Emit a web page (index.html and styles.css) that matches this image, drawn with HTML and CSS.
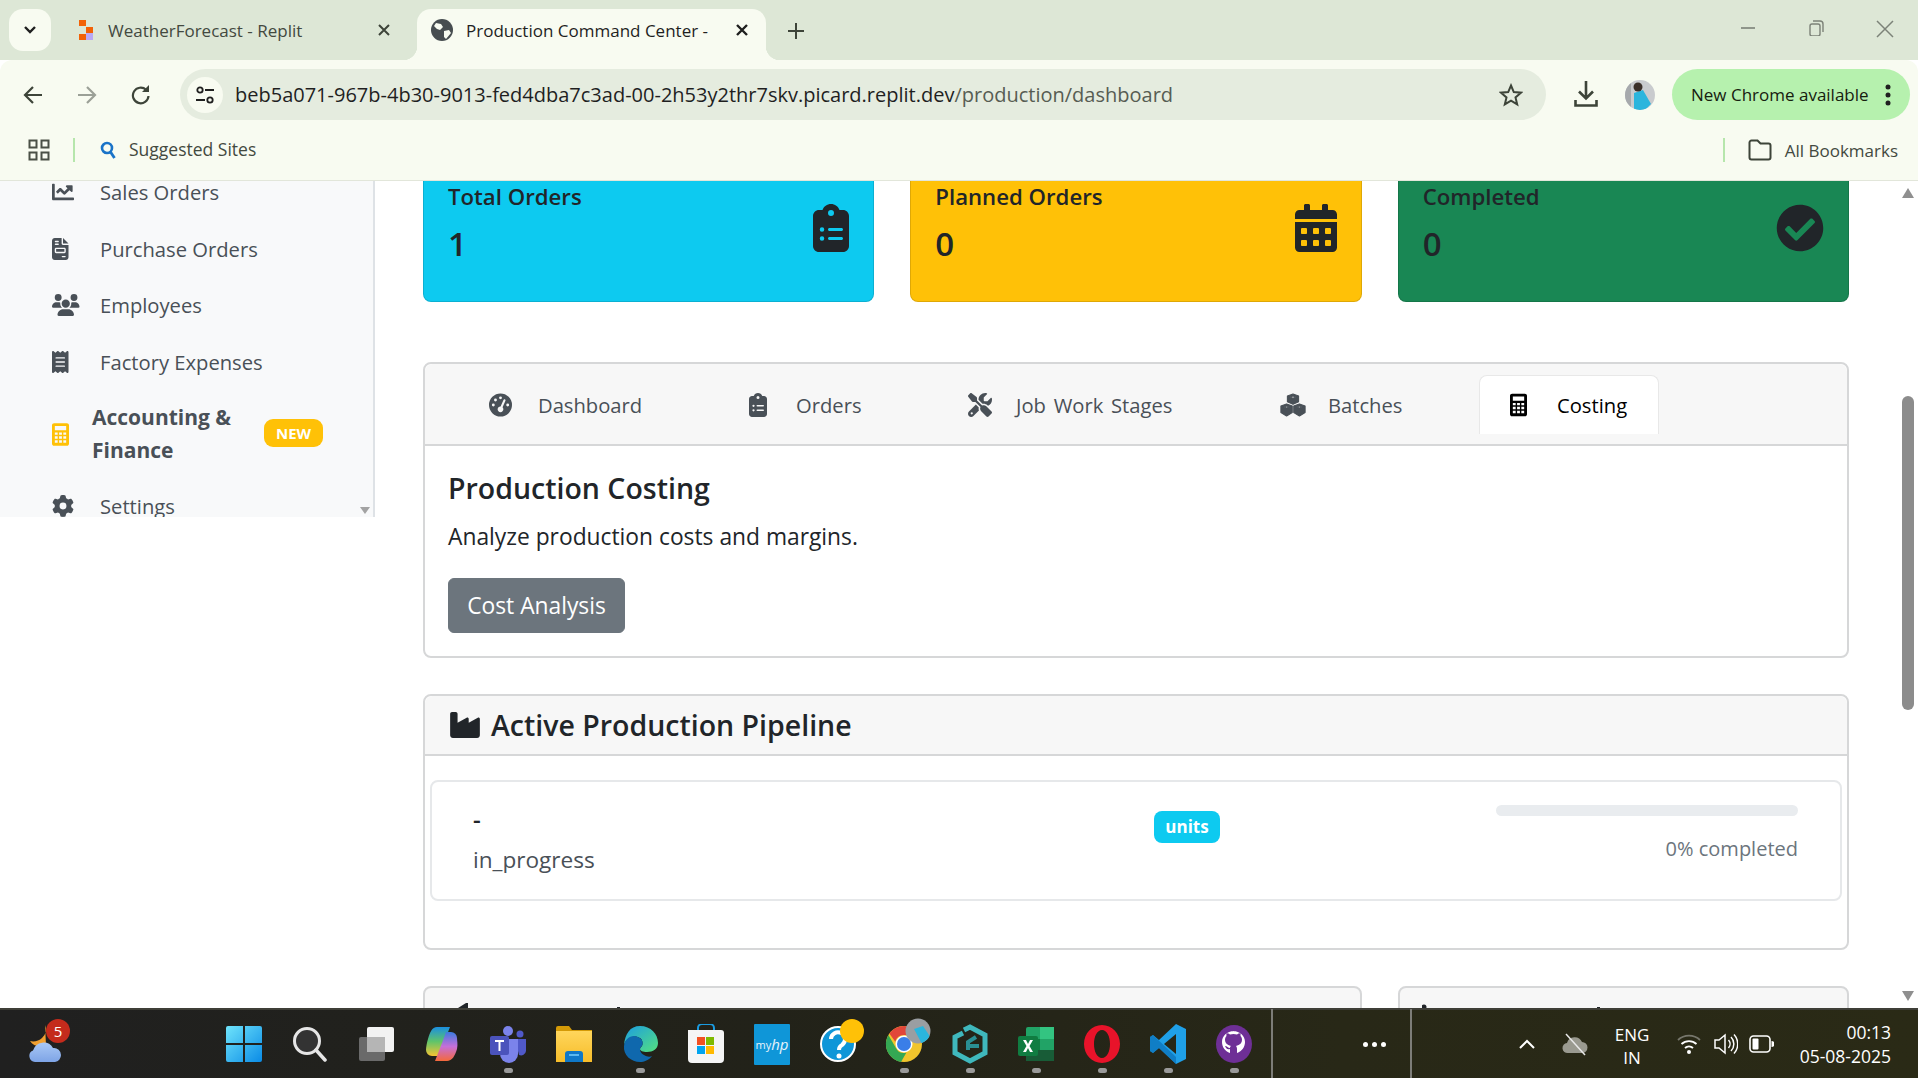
FILE: index.html
```html
<!DOCTYPE html>
<html lang="en">
<head>
    <meta charset="UTF-8">
    <title>Production Command Center</title>
    <link rel="stylesheet" href="styles.css">
</head>
<body>
<svg class="defs" xmlns="http://www.w3.org/2000/svg">
    <symbol id="i-chart" viewBox="0 0 512 512" preserveAspectRatio="xMinYMid"><path d="M496 384H64V80c0-8.84-7.16-16-16-16H16C7.16 64 0 71.16 0 80v336c0 17.67 14.33 32 32 32h464c8.84 0 16-7.16 16-16v-32c0-8.84-7.16-16-16-16zM464 96H345.94c-21.38 0-32.09 25.85-16.97 40.97l32.4 32.4L288 242.75l-73.37-73.37c-12.5-12.5-32.76-12.5-45.25 0l-68.69 68.69c-6.25 6.25-6.25 16.38 0 22.63l22.62 22.62c6.25 6.25 16.38 6.25 22.63 0L192 237.25l73.37 73.37c12.5 12.5 32.76 12.5 45.25 0l96-96 32.4 32.4c15.12 15.12 40.97 4.41 40.97-16.97V112c0-8.84-7.16-16-16-16z"/></symbol>
    <symbol id="i-invoice" viewBox="0 0 384 512" preserveAspectRatio="xMinYMid"><path d="M64 0C28.7 0 0 28.7 0 64V448c0 35.3 28.7 64 64 64H320c35.3 0 64-28.7 64-64V160H256c-17.7 0-32-14.3-32-32V0H64zM256 0V128H384L256 0zM80 64h64c8.8 0 16 7.2 16 16s-7.2 16-16 16H80c-8.8 0-16-7.2-16-16s7.2-16 16-16zm0 64h64c8.8 0 16 7.2 16 16s-7.2 16-16 16H80c-8.8 0-16-7.2-16-16s7.2-16 16-16zm16 96H288c17.7 0 32 14.3 32 32v64c0 17.7-14.3 32-32 32H96c-17.7 0-32-14.3-32-32V256c0-17.7 14.3-32 32-32zm0 32v64H288V256H96zM240 416h64c8.8 0 16 7.2 16 16s-7.2 16-16 16H240c-8.8 0-16-7.2-16-16s7.2-16 16-16z"/></symbol>
    <symbol id="i-users" viewBox="0 0 640 512" preserveAspectRatio="xMinYMid"><path d="M144 0a80 80 0 1 1 0 160A80 80 0 1 1 144 0zM512 0a80 80 0 1 1 0 160A80 80 0 1 1 512 0zM0 298.7C0 239.8 47.8 192 106.7 192h42.7c15.9 0 31 3.5 44.6 9.7c-1.3 7.2-1.9 14.7-1.9 22.3c0 38.2 16.8 72.5 43.3 96c-.2 0-.4 0-.7 0H21.3C9.6 320 0 310.4 0 298.7zM405.3 320c-.2 0-.4 0-.7 0c26.6-23.5 43.3-57.8 43.3-96c0-7.6-.7-15-1.9-22.3c13.6-6.3 28.7-9.7 44.6-9.7h42.7C592.2 192 640 239.8 640 298.7c0 11.8-9.6 21.3-21.3 21.3H405.3zM224 224a96 96 0 1 1 192 0 96 96 0 1 1 -192 0zM128 485.3C128 411.7 187.7 352 261.3 352H378.7C452.3 352 512 411.7 512 485.3c0 14.7-11.9 26.7-26.7 26.7H154.7c-14.7 0-26.7-11.9-26.7-26.7z"/></symbol>
    <symbol id="i-receipt" viewBox="0 0 384 512" preserveAspectRatio="xMinYMid"><path d="M14 2.2C22.5-1.7 32.5-.3 39.6 5.8L80 40.4 120.4 5.8c9-7.7 22.3-7.7 31.2 0L192 40.4 232.4 5.8c9-7.7 22.2-7.7 31.2 0L304 40.4 344.4 5.8c7.1-6.1 17.1-7.5 25.6-3.6s14 12.4 14 21.8V488c0 9.4-5.5 17.9-14 21.8s-18.5 2.5-25.6-3.6L304 471.6l-40.4 34.6c-9 7.7-22.3 7.7-31.2 0L192 471.6l-40.4 34.6c-9 7.7-22.2 7.7-31.2 0L80 471.6 39.6 506.2c-7.1 6.1-17.1 7.5-25.6 3.6S0 497.4 0 488V24C0 14.6 5.5 6.1 14 2.2zM96 144c-8.8 0-16 7.2-16 16s7.2 16 16 16H288c8.8 0 16-7.2 16-16s-7.2-16-16-16H96zM80 352c0 8.8 7.2 16 16 16H288c8.8 0 16-7.2 16-16s-7.2-16-16-16H96c-8.8 0-16 7.2-16 16zM96 240c-8.8 0-16 7.2-16 16s7.2 16 16 16H288c8.8 0 16-7.2 16-16s-7.2-16-16-16H96z"/></symbol>
    <symbol id="i-calc" viewBox="0 0 384 512"><path fill-rule="evenodd" d="M48 0H336C362.500 0 384 21.500 384 48V464C384 490.500 362.500 512 336 512H48C21.500 512 0 490.500 0 464V48C0 21.500 21.500 0 48 0zM64 64V160H320V64zM64 208v56h64v-56zM160 208v56h64v-56zM256 208v56h64v-56zM64 296v56h64v-56zM160 296v56h64v-56zM256 296v56h64v-56zM64 384v56h64v-56zM160 384v56h64v-56zM256 384v56h64v-56z"/></symbol>
    <symbol id="i-gear" viewBox="0 0 512 512" preserveAspectRatio="xMinYMid"><path d="M495.900 166.600c3.200 8.700 .5 18.400-6.400 24.600l-43.300 39.400c1.100 8.300 1.700 16.800 1.700 25.400s-.6 17.100-1.700 25.400l43.300 39.400c6.900 6.200 9.600 15.900 6.400 24.600c-4.400 11.900-9.700 23.300-15.800 34.300l-4.700 8.100c-6.600 11-14 21.400-22.100 31.200c-5.900 7.200-15.700 9.600-24.500 6.800l-55.700-17.700c-13.400 10.300-28.200 18.900-44 25.400l-12.500 57.100c-2 9.100-9 16.300-18.200 17.800c-13.800 2.300-28 3.500-42.500 3.500s-28.700-1.200-42.500-3.500c-9.200-1.500-16.200-8.700-18.200-17.800l-12.500-57.100c-15.800-6.500-30.600-15.100-44-25.400L83.100 425.900c-8.800 2.800-18.600 .3-24.500-6.800c-8.100-9.800-15.500-20.200-22.100-31.200l-4.700-8.100c-6.100-11-11.400-22.400-15.800-34.300c-3.200-8.700-.5-18.400 6.400-24.600l43.300-39.400C64.600 273.100 64 264.600 64 256s.6-17.100 1.700-25.400L22.400 191.200c-6.900-6.200-9.600-15.900-6.400-24.600c4.400-11.900 9.700-23.300 15.800-34.300l4.700-8.100c6.600-11 14-21.400 22.100-31.200c5.900-7.200 15.700-9.600 24.500-6.800l55.700 17.700c13.400-10.300 28.200-18.900 44-25.400l12.500-57.100c2-9.100 9-16.300 18.200-17.800C227.300 1.200 241.500 0 256 0s28.700 1.200 42.500 3.500c9.200 1.500 16.200 8.700 18.200 17.800l12.500 57.100c15.800 6.500 30.600 15.100 44 25.400l55.700-17.700c8.800-2.800 18.600-.3 24.500 6.800c8.100 9.800 15.500 20.200 22.100 31.200l4.700 8.100c6.100 11 11.400 22.400 15.800 34.300zM256 336a80 80 0 1 0 0-160 80 80 0 1 0 0 160z"/></symbol>
    <symbol id="i-clip" viewBox="0 0 384 512"><path d="M192 0c-41.800 0-77.400 26.700-90.500 64H64C28.700 64 0 92.700 0 128V448c0 35.300 28.700 64 64 64H320c35.300 0 64-28.700 64-64V128c0-35.300-28.700-64-64-64H282.500C269.400 26.700 233.800 0 192 0zm0 64a32 32 0 1 1 0 64 32 32 0 1 1 0-64zM72 272a24 24 0 1 1 48 0 24 24 0 1 1 -48 0zm104-16H304c8.800 0 16 7.200 16 16s-7.200 16-16 16H176c-8.800 0-16-7.200-16-16s7.200-16 16-16zM72 368a24 24 0 1 1 48 0 24 24 0 1 1 -48 0zm88 0c0-8.800 7.200-16 16-16H304c8.800 0 16 7.200 16 16s-7.200 16-16 16H176c-8.800 0-16-7.200-16-16z"/></symbol>
    <symbol id="i-calendar" viewBox="0 0 448 512"><path d="M0 464c0 26.500 21.500 48 48 48h352c26.500 0 48-21.500 48-48V192H0v272zm320-196c0-6.600 5.400-12 12-12h40c6.600 0 12 5.400 12 12v40c0 6.600-5.400 12-12 12h-40c-6.600 0-12-5.400-12-12v-40zm0 128c0-6.600 5.400-12 12-12h40c6.600 0 12 5.400 12 12v40c0 6.600-5.400 12-12 12h-40c-6.600 0-12-5.400-12-12v-40zM192 268c0-6.600 5.400-12 12-12h40c6.600 0 12 5.400 12 12v40c0 6.600-5.400 12-12 12h-40c-6.600 0-12-5.400-12-12v-40zm0 128c0-6.600 5.400-12 12-12h40c6.600 0 12 5.400 12 12v40c0 6.600-5.400 12-12 12h-40c-6.600 0-12-5.400-12-12v-40zM64 268c0-6.600 5.400-12 12-12h40c6.600 0 12 5.400 12 12v40c0 6.600-5.400 12-12 12H76c-6.600 0-12-5.400-12-12v-40zm0 128c0-6.600 5.400-12 12-12h40c6.600 0 12 5.400 12 12v40c0 6.600-5.400 12-12 12H76c-6.600 0-12-5.400-12-12v-40zM400 64h-48V16c0-8.800-7.200-16-16-16h-32c-8.800 0-16 7.200-16 16v48H160V16c0-8.800-7.200-16-16-16h-32c-8.800 0-16 7.200-16 16v48H48C21.500 64 0 85.500 0 112v48h448v-48c0-26.500-21.500-48-48-48z"/></symbol>
    <symbol id="i-check" viewBox="0 0 512 512"><path d="M504 256c0 136.967-111.033 248-248 248S8 392.967 8 256 119.033 8 256 8s248 111.033 248 248zM227.314 387.314l184-184c6.248-6.248 6.248-16.379 0-22.627l-22.627-22.627c-6.248-6.249-16.379-6.249-22.628 0L216 308.118l-70.059-70.059c-6.248-6.248-16.379-6.248-22.628 0l-22.627 22.627c-6.248 6.248-6.248 16.379 0 22.627l104 104c6.249 6.249 16.379 6.249 22.628.001z"/></symbol>
    <symbol id="i-gauge" viewBox="0 0 512 512"><path d="M0 256a256 256 0 1 1 512 0A256 256 0 1 1 0 256zM288 96a32 32 0 1 0 -64 0 32 32 0 1 0 64 0zM256 416c35.300 0 64-28.700 64-64c0-17.400-6.900-33.100-18.100-44.600L366 161.700c5.300-12.100-.2-26.300-12.300-31.600s-26.300 .2-31.600 12.300L257.900 288c-.6 0-1.300 0-1.900 0c-35.300 0-64 28.700-64 64s28.700 64 64 64zM176 144a32 32 0 1 0 -64 0 32 32 0 1 0 64 0zM96 288a32 32 0 1 0 0-64 32 32 0 1 0 0 64zm352-32a32 32 0 1 0 -64 0 32 32 0 1 0 64 0z"/></symbol>
    <symbol id="i-tools" viewBox="0 0 512 512"><path d="M78.600 5C69.100-2.400 55.600-1.500 47 7L7 47c-8.500 8.500-9.400 22-2.100 31.600l80 104c4.500 5.900 11.600 9.400 19 9.400h54.100l109 109c-14.700 29-10 65.400 14.300 89.600l112 112c12.500 12.500 32.800 12.500 45.300 0l64-64c12.500-12.500 12.500-32.800 0-45.300l-112-112c-24.200-24.200-60.600-29-89.600-14.300l-109-109V104c0-7.500-3.500-14.500-9.400-19L78.600 5zM19.900 396.100C7.200 408.800 0 426.100 0 444.100C0 481.600 30.400 512 67.900 512c18 0 35.300-7.200 48-19.900L233.700 374.300c-7.800-20.900-9-43.600-3.600-65.100l-61.700-61.700L19.900 396.100zM512 144c0-10.500-1.100-20.700-3.200-30.500c-2.400-11.200-16.100-14.100-24.200-6l-63.900 63.900c-3 3-7.100 4.700-11.300 4.700H352c-8.800 0-16-7.200-16-16V102.600c0-4.200 1.700-8.300 4.700-11.300l63.900-63.900c8.100-8.100 5.200-21.800-6-24.200C388.700 1.100 378.500 0 368 0C288.500 0 224 64.500 224 144l0 .8 85.300 85.300c36-9.100 75.800 .5 104 28.700L429 274.500c49-23 83-72.800 83-130.500zM56 432a24 24 0 1 1 48 0 24 24 0 1 1 -48 0z"/></symbol>
    <symbol id="i-cubes" viewBox="0 0 576 512"><path fill-rule="evenodd" stroke="currentColor" stroke-width="24" stroke-linejoin="round" d="M288 12L412 58V186L288 242 164 186V58zM288 58L226 80 288 104 350 80zM146 232L272 280V424L146 500 20 424V280zM146 278L84 300 146 324 208 300zM430 232L556 280V424L430 500 304 424V280zM430 278L368 300 430 324 492 300z"/></symbol>
    <symbol id="i-factory" viewBox="32 32 512 448"><path d="M64 32C46.300 32 32 46.300 32 64V304v48 80c0 26.500 21.500 48 48 48H496c26.500 0 48-21.500 48-48V304 152.200c0-18.200-19.400-29.700-35.400-21.100L352 215.400V152.200c0-18.200-19.400-29.700-35.400-21.100L160 215.400V64c0-17.700-14.300-32-32-32H64z"/></symbol>
</svg>

<div class="tabstrip">
    <div class="tab-search"><svg width="14" height="10" viewBox="0 0 14 10"><path d="M2 2l5 5 5-5" fill="none" stroke="#1f1f1f" stroke-width="2.400"/></svg></div>
    <div class="tab">
        <svg class="favicon" width="14" height="20" viewBox="0 0 14 20"><path d="M0 0h7v6H0zM7 7h7v6H7z" fill="#f26207"/><path d="M0 14h7v6H0z" fill="#f26207"/><path d="M7 13h7v7H7z" fill="#b9a9f5"/></svg>
        <span class="tab-title">WeatherForecast - Replit</span>
        <svg class="tab-x" width="14" height="14" viewBox="0 0 14 14"><path d="M2 2l10 10M12 2L2 12" stroke="#3d4439" stroke-width="2"/></svg>
    </div>
    <div class="tab active">
        <svg class="favicon" width="22" height="22" viewBox="0 0 22 22"><circle cx="11" cy="11" r="11" fill="#474d50"/><path d="M5 4l5 1 2 3-3 3-3-1-3-3zM13 12l5-1 2 3-5 6-2-2z" fill="#f8fbf1"/></svg>
        <span class="tab-title">Production Command Center - </span>
        <svg class="tab-x" width="14" height="14" viewBox="0 0 14 14"><path d="M2 2l10 10M12 2L2 12" stroke="#1f1f1f" stroke-width="2.400"/></svg>
    </div>
    <svg class="tab-plus" width="18" height="18" viewBox="0 0 18 18"><path d="M9 1v16M1 9h16" stroke="#3d4439" stroke-width="2"/></svg>
    <div class="win-btns">
        <svg width="16" height="16" viewBox="0 0 16 16"><path d="M1 8h14" stroke="#7c8278" stroke-width="1.600"/></svg>
        <svg width="16" height="16" viewBox="0 0 16 16"><rect x="2" y="4" width="10" height="12" rx="2" fill="none" stroke="#7c8278" stroke-width="1.400"/><path d="M5 1h7a3 3 0 0 1 3 3v8" fill="none" stroke="#7c8278" stroke-width="1.400"/></svg>
        <svg width="18" height="18" viewBox="0 0 18 18"><path d="M1 1l16 16M17 1L1 17" stroke="#7c8278" stroke-width="1.500"/></svg>
    </div>
</div>

<div class="toolbar">
    <div class="nav-btn"><svg width="20" height="20" viewBox="0 0 20 20"><path d="M19 10H2M10 2l-8 8 8 8" fill="none" stroke="#3d4439" stroke-width="2.200"/></svg></div>
    <div class="nav-btn"><svg width="20" height="20" viewBox="0 0 20 20"><path d="M1 10h17M10 2l8 8-8 8" fill="none" stroke="#9ba097" stroke-width="2.200"/></svg></div>
    <div class="nav-btn"><svg width="20" height="22" viewBox="0 0 20 22"><path d="M17.500 12a7.800 7.800 0 1 1-2.400-6.200" fill="none" stroke="#3d4439" stroke-width="2.200"/><path d="M18 1v7h-7z" fill="#3d4439"/></svg></div>
    <div class="omnibox">
        <div class="site-info"><svg width="20" height="20" viewBox="0 0 20 20"><circle cx="5" cy="5" r="2.700" fill="none" stroke="#1f1f1f" stroke-width="1.800"/><path d="M10 5h9M1 15h9" stroke="#1f1f1f" stroke-width="1.800"/><circle cx="15" cy="15" r="2.700" fill="none" stroke="#1f1f1f" stroke-width="1.800"/></svg></div>
        <span class="url">beb5a071-967b-4b30-9013-fed4dba7c3ad-00-2h53y2thr7skv.picard.replit.dev<span class="url-path">/production/dashboard</span></span>
        <svg class="star" width="24" height="24" viewBox="0 0 24 24"><path d="M12 2.500l2.800 6.600 7.200.6-5.500 4.700 1.700 7-6.200-3.700-6.200 3.700 1.700-7L2 9.700l7.200-.6z" fill="none" stroke="#3d4439" stroke-width="2"/></svg>
    </div>
    <svg class="download" width="24" height="28" viewBox="0 0 24 28"><path d="M12 1v17M5 11.500l7 7 7-7" fill="none" stroke="#3d4439" stroke-width="2.600"/><path d="M1.500 20v5.500h21V20" fill="none" stroke="#3d4439" stroke-width="2.600"/></svg>
    <svg class="avatar" width="30" height="30" viewBox="0 0 30 30"><defs><clipPath id="av"><circle cx="15" cy="15" r="15"/></clipPath></defs><g clip-path="url(#av)"><rect width="30" height="30" fill="#c9cbce"/><rect width="6" height="30" fill="#a6a9ac"/><path d="M9 13l9-3 8 14-6 6H9z" fill="#2bb5dd"/><circle cx="13" cy="7" r="4.500" fill="#3b3029"/></g></svg>
    <div class="update-chip">
        <span>New Chrome available</span>
        <svg width="6" height="22" viewBox="0 0 6 22"><circle cx="3" cy="3" r="2.500" fill="#1f1f1f"/><circle cx="3" cy="11" r="2.500" fill="#1f1f1f"/><circle cx="3" cy="19" r="2.500" fill="#1f1f1f"/></svg>
    </div>
</div>

<div class="bookmarks">
    <svg class="apps" width="22" height="22" viewBox="0 0 22 22"><path d="M1.500 1.500h7v7h-7zM13.500 1.500h7v7h-7zM1.500 13.500h7v7h-7zM13.500 13.500h7v7h-7z" fill="none" stroke="#4a5046" stroke-width="2"/></svg>
    <div class="bm-sep"></div>
    <div class="bm-item">
        <svg width="16" height="18" viewBox="0 0 16 18"><circle cx="7" cy="7" r="5" fill="none" stroke="#1a73c8" stroke-width="2.600"/><path d="M10.500 11l4 6" stroke="#1a73c8" stroke-width="2.800"/></svg>
        <span>Suggested Sites</span>
    </div>
    <div class="bm-all">
        <div class="bm-sep"></div>
        <svg width="24" height="22" viewBox="0 0 24 22"><path d="M1.500 3.500a2 2 0 0 1 2-2h6l3 3h8a2 2 0 0 1 2 2v12a2 2 0 0 1-2 2h-17a2 2 0 0 1-2-2z" fill="none" stroke="#3d4439" stroke-width="2"/></svg>
        <span>All Bookmarks</span>
    </div>
</div>

<div class="page">
    <aside class="sidebar">
        <ul class="side-menu">
            <li><svg class="side-icon"><use href="#i-chart"/></svg><span>Sales Orders</span></li>
            <li><svg class="side-icon"><use href="#i-invoice"/></svg><span>Purchase Orders</span></li>
            <li><svg class="side-icon"><use href="#i-users"/></svg><span>Employees</span></li>
            <li><svg class="side-icon"><use href="#i-receipt"/></svg><span>Factory Expenses</span></li>
            <li class="side-accent">
                <svg class="side-icon-small"><use href="#i-calc"/></svg>
                <span class="side-strong">Accounting &amp; Finance</span>
                <span class="new-badge">NEW</span>
            </li>
            <li><svg class="side-icon"><use href="#i-gear"/></svg><span>Settings</span></li>
        </ul>
        <div class="side-arrow"></div>
    </aside>

    <main class="main">
        <section class="stats">
            <div class="stat stat-info">
                <div><h5>Total Orders</h5><div class="stat-value">1</div></div>
                <svg class="stat-icon icon-clip"><use href="#i-clip"/></svg>
            </div>
            <div class="stat stat-warning">
                <div><h5>Planned Orders</h5><div class="stat-value">0</div></div>
                <svg class="stat-icon icon-cal"><use href="#i-calendar"/></svg>
            </div>
            <div class="stat stat-success">
                <div><h5>Completed</h5><div class="stat-value">0</div></div>
                <svg class="stat-icon icon-check"><use href="#i-check"/></svg>
            </div>
        </section>

        <section class="card card-tabs">
            <nav class="tabs-head">
                <a class="tab-link"><svg class="ti ti-gauge"><use href="#i-gauge"/></svg>Dashboard</a>
                <a class="tab-link"><svg class="ti ti-clip"><use href="#i-clip"/></svg>Orders</a>
                <a class="tab-link"><svg class="ti ti-tools"><use href="#i-tools"/></svg>Job Work Stages</a>
                <a class="tab-link"><svg class="ti ti-cubes"><use href="#i-cubes"/></svg>Batches</a>
                <a class="tab-link current"><svg class="ti ti-calc"><use href="#i-calc"/></svg>Costing</a>
            </nav>
            <div class="tabs-body">
                <h4>Production Costing</h4>
                <p>Analyze production costs and margins.</p>
                <button class="btn-grey">Cost Analysis</button>
            </div>
        </section>

        <section class="card card-pipeline">
            <header class="card-head">
                <svg class="head-icon"><use href="#i-factory"/></svg>
                <h3>Active Production Pipeline</h3>
            </header>
            <div class="pipe-body">
                <div class="pipe-row">
                    <div class="pipe-name">
                        <div class="pipe-dash">-</div>
                        <div class="pipe-status">in_progress</div>
                    </div>
                    <div class="pipe-badge"><span class="units">units</span></div>
                    <div class="pipe-progress">
                        <div class="bar"></div>
                        <div class="bar-label">0% completed</div>
                    </div>
                </div>
            </div>
        </section>

        <section class="bottom-row">
            <div class="card card-peek peek-left">
                <svg class="peek-marks" width="165" height="20" viewBox="0 0 165 20"><path d="M0 20L8 15h2v5zM159 19h3v1h-3z" fill="#212529"/></svg>
            </div>
            <div class="card card-peek peek-right">
                <svg class="peek-marks" width="180" height="20" viewBox="0 0 180 20"><circle cx="2" cy="19" r="2.500" fill="#212529"/><path d="M175 19h3v1h-3z" fill="#212529"/></svg>
            </div>
        </section>
    </main>

    <div class="scrollbar">
        <div class="sb-up"></div>
        <div class="sb-thumb"></div>
        <div class="sb-down"></div>
    </div>
</div>

<footer class="taskbar">
    <div class="weather">
        <svg width="42" height="40" viewBox="0 0 42 40"><path d="M18 1a11 11 0 0 1-3 13c-3 3-8 4-12 3 3 5 10 7 16 4z" fill="#f0a030"/><defs><linearGradient id="wc" x1="0" y1="0" x2="0" y2="1"><stop offset="0" stop-color="#a9c8f5"/><stop offset="1" stop-color="#7ea4e6"/></linearGradient></defs><path d="M8 38a6 6 0 0 1-2-11.500A11 11 0 0 1 26 24a7 7 0 0 1 8 7 7 7 0 0 1-6 7z" fill="url(#wc)"/></svg>
        <span class="weather-badge">5</span>
    </div>
    <div class="task-icons">
        <div class="task"><svg width="36" height="36" viewBox="0 0 36 36"><defs><linearGradient id="w1" x1="0" y1="0" x2="1" y2="1"><stop offset="0" stop-color="#6fe4fb"/><stop offset="1" stop-color="#0a8be6"/></linearGradient></defs><path d="M0 2a2 2 0 0 1 2-2h15v17H0zM19 0h15a2 2 0 0 1 2 2v15H19zM0 19h17v17H2a2 2 0 0 1-2-2zM19 19h17v15a2 2 0 0 1-2 2H19z" fill="url(#w1)"/></svg></div>
        <div class="task"><svg width="36" height="36" viewBox="0 0 36 36"><circle cx="15" cy="15" r="12.500" fill="#333" stroke="#e6e6e6" stroke-width="3"/><path d="M24 24l9 10" stroke="#e6e6e6" stroke-width="3.500" stroke-linecap="round"/></svg></div>
        <div class="task"><svg width="36" height="36" viewBox="0 0 36 36"><rect x="1" y="11" width="26" height="24" rx="2" fill="#6a6a6a"/><rect x="9" y="1" width="27" height="25" rx="2" fill="#f2f2f2"/><rect x="9" y="11" width="18" height="15" fill="#b5b5b5"/></svg></div>
        <div class="task"><svg width="36" height="36" viewBox="0 0 36 36"><defs><linearGradient id="c1" x1="0" y1="0" x2="0" y2="1"><stop offset="0" stop-color="#1b8fe0"/><stop offset=".5" stop-color="#5fc46a"/><stop offset="1" stop-color="#f5c433"/></linearGradient><linearGradient id="c2" x1="0" y1="0" x2="0" y2="1"><stop offset="0" stop-color="#3b7be0"/><stop offset=".5" stop-color="#c66fd8"/><stop offset="1" stop-color="#f5693a"/></linearGradient></defs><path d="M13 1h13l-7 18-4 11H8a6 6 0 0 1-6-6c0-3 1-8 2-11 2-7 4-12 9-12z" fill="url(#c1)"/><path d="M23 35H11l7-18 4-11h5a6 6 0 0 1 6 6c0 3 1 6 0 11-2 7-5 12-10 12z" fill="url(#c2)"/></svg></div>
        <div class="task has-dot"><svg width="36" height="38" viewBox="0 0 36 38"><circle cx="18" cy="6" r="5" fill="#7b83eb"/><circle cx="30" cy="9" r="3.500" fill="#5059c9"/><path d="M25 14h11v12a5 5 0 0 1-7 4z" fill="#5059c9"/><path d="M10 14h18v15a9 9 0 0 1-18 0z" fill="#7b83eb"/><rect x="0" y="11" width="19" height="19" rx="2" fill="#4b53bc"/><path d="M5 15h9v2h-3.500v9h-2v-9H5z" fill="#fff"/></svg></div>
        <div class="task"><svg width="36" height="36" viewBox="0 0 36 36"><defs><linearGradient id="f1" x1="0" y1="0" x2="0" y2="1"><stop offset="0" stop-color="#ffd65c"/><stop offset="1" stop-color="#f7bd2a"/></linearGradient></defs><path d="M0 2a2 2 0 0 1 2-2h11l3 4h20v6H0z" fill="#d49a07"/><rect y="5" width="36" height="31" fill="url(#f1)"/><path d="M9 36v-8a3 3 0 0 1 3-3h12a3 3 0 0 1 3 3v8z" fill="#0f78c8"/><rect x="13" y="28" width="10" height="2" fill="#5ab8f0"/></svg></div>
        <div class="task has-dot"><svg width="36" height="36" viewBox="0 0 36 36"><defs><linearGradient id="e2" x1="0" y1="0" x2="1" y2="1"><stop offset="0" stop-color="#1b9de2"/><stop offset="1" stop-color="#54e07f"/></linearGradient></defs><path d="M18 0c11 0 18 8 18 17 0 6-5 9-11 9-4 0-7-1-7-3 0-1 1-2 2-3 1-2 1-6-2-8-6-4-14 0-16 7C3 8 8 0 18 0z" fill="url(#e2)"/><path d="M2 20c1-8 8-12 14-9 5 2 6 7 3 10-2 2-1 6 3 8 3 2 6 2 8 1-3 4-8 6-12 6C9 36 1 29 2 20z" fill="#0f68ad"/></svg></div>
        <div class="task"><svg width="36" height="40" viewBox="0 0 36 40"><path d="M10 8V4a4 4 0 0 1 4-4h8a4 4 0 0 1 4 4v4" fill="none" stroke="#1a9be0" stroke-width="2"/><path d="M0 6h33a3 3 0 0 1 3 3v26a4 4 0 0 1-4 4H4a4 4 0 0 1-4-4z" fill="#f5f5f5"/><rect x="9" y="13" width="8" height="8" fill="#f25022"/><rect x="18" y="13" width="8" height="8" fill="#7fba00"/><rect x="9" y="22" width="8" height="8" fill="#00a4ef"/><rect x="18" y="22" width="8" height="8" fill="#ffb900"/></svg></div>
        <div class="task"><div class="myhp"><span>my</span><b>hp</b></div></div>
        <div class="task"><svg class="over" width="36" height="36" viewBox="0 0 36 36"><circle cx="18" cy="18" r="17" fill="#0f96d8" stroke="#fff" stroke-width="2"/><path d="M11 13a7 7 0 1 1 11 6c-2 1-3 2-3 5" fill="none" stroke="#fff" stroke-width="4"/><circle cx="19" cy="30" r="2.500" fill="#fff"/><circle cx="32" cy="5" r="12" fill="#ffc107"/></svg></div>
        <div class="task has-dot"><svg class="over" width="36" height="36" viewBox="0 0 36 36"><defs><clipPath id="ca"><circle cx="32" cy="5" r="12.500"/></clipPath></defs><circle cx="18" cy="18" r="18" fill="#f1c52c"/><path d="M18 0a18 18 0 0 1 15.600 9H18a9 9 0 0 0-8.700 6.700L3.300 7.600A18 18 0 0 1 18 0z" fill="#e1463a"/><path d="M2.400 9L10.200 22.500a9 9 0 0 0 10.100 4.200L15 36A18 18 0 0 1 2.400 9z" fill="#34a853"/><circle cx="18" cy="18" r="8.500" fill="#fff"/><circle cx="18" cy="18" r="7" fill="#3a7ee8"/><g clip-path="url(#ca)"><rect x="19" y="-8" width="26" height="26" fill="#9a9ea2"/><path d="M28 3l9-3 8 12-9 6z" fill="#2bb5dd"/></g></svg></div>
        <div class="task has-dot"><svg width="36" height="40" viewBox="0 0 36 40"><path d="M12 6l6-3 15 8v18l-15 8-15-8V13l8-4" fill="none" stroke="#3fb8bd" stroke-width="5"/><path d="M18 22h9M24 13l-8 5v8" fill="none" stroke="#2a8f94" stroke-width="4"/></svg></div>
        <div class="task has-dot"><svg width="36" height="36" viewBox="0 0 36 36"><rect x="8" y="1" width="28" height="34" rx="2" fill="#21a366"/><rect x="22" y="1" width="14" height="12" fill="#33c481"/><rect x="8" y="24" width="28" height="11" fill="#185c37"/><rect x="8" y="13" width="14" height="11" fill="#107c41"/><rect y="10" width="20" height="20" rx="2" fill="#107c41"/><path d="M5 14h3l2 4 2-4h3l-3.500 6L15 26h-3l-2-4-2 4H5l3.500-6z" fill="#fff"/></svg></div>
        <div class="task has-dot"><svg width="36" height="38" viewBox="0 0 36 38"><path fill-rule="evenodd" d="M18 0c10 0 18 8.500 18 19s-8 19-18 19S0 29.500 0 19 8 0 18 0zm0 5c-5 0-8 6.500-8 14s3 14 8 14 8-6.500 8-14-3-14-8-14z" fill="#e8132a"/></svg></div>
        <div class="task has-dot"><svg width="36" height="40" viewBox="0 0 36 40"><path d="M26 0l10 5v30l-10 5-17-16-6 5-3-2V13l3-2 6 5z" fill="#1fa0e8"/><path d="M26 10L14 20l12 10z" fill="#272717"/><path d="M0 13l3-2 23 22v7L9 24 3 29l-3-2z" fill="#0a6fb8" opacity=".7"/></svg></div>
        <div class="task has-dot"><svg width="36" height="38" viewBox="0 0 36 38"><ellipse cx="18" cy="19" rx="18" ry="19" fill="#6e2f96"/><path fill="#fff" d="M18 6c-7 0-12 5-12 11 0 5 3 9 8 11v-4c-3 1-4-1-5-3 2 0 3 2 5 2 0-1 .5-2 1-2-4-1-6-3-6-6 0-2 .5-3 1.500-4-.3-1 0-3 .5-3 1 0 2 .5 3 1.500a12 12 0 0 1 7 0c1-1 2-1.500 3-1.500.5 0 .8 2 .5 3 1 1 1.500 2 1.500 4 0 3-2 5-6 6 .5.5 1 1.500 1 3v4c5-2 8-6 8-11 0-6-5-11-12-11z"/></svg></div>
    </div>
    <div class="task-sep"></div>
    <div class="task-more"><span></span><span></span><span></span></div>
    <div class="task-sep"></div>
    <div class="tray">
        <svg class="tray-chev" width="18" height="12" viewBox="0 0 18 12"><path d="M2 10l7-7 7 7" fill="none" stroke="#fff" stroke-width="2"/></svg>
        <svg class="tray-cloud" width="26" height="24" viewBox="0 0 26 24"><path d="M6 21a5 5 0 0 1-1-10 8 8 0 0 1 15-1 5.500 5.500 0 0 1 0 11z" fill="#9a9a90"/><path d="M4 2l19 21" stroke="#e8e8e8" stroke-width="1.500"/></svg>
        <div class="tray-lang"><div>ENG</div><div>IN</div></div>
        <svg class="tray-wifi" width="24" height="22" viewBox="0 0 24 22"><path d="M1 7a16 16 0 0 1 22 0" fill="none" stroke="#77776c" stroke-width="1.800"/><path d="M4.500 11a11 11 0 0 1 15 0M8 15a6 6 0 0 1 8 0" fill="none" stroke="#fff" stroke-width="1.800"/><circle cx="12" cy="19" r="2" fill="#fff"/></svg>
        <svg class="tray-vol" width="24" height="24" viewBox="0 0 24 24"><path d="M1 8h4l6-5v18l-6-5H1z" fill="none" stroke="#fff" stroke-width="1.500"/><path d="M14.500 8a6 6 0 0 1 0 8M17 5a10 10 0 0 1 0 14M20 2.500a14 14 0 0 1 0 19" fill="none" stroke="#fff" stroke-width="1.500"/></svg>
        <svg class="tray-batt" width="25" height="18" viewBox="0 0 25 18"><rect x="1" y="1" width="20" height="16" rx="3.500" fill="none" stroke="#fff" stroke-width="1.600"/><rect x="3.500" y="3.500" width="6" height="11" rx="1" fill="#fff"/><path d="M22.500 6a3 3 0 0 1 0 6z" fill="#fff"/></svg>
        <div class="tray-clock"><div>00:13</div><div>05-08-2025</div></div>
    </div>
</footer>
</body>
</html>
```

FILE: styles.css
```css
* {
    margin: 0;
    padding: 0;
    box-sizing: border-box;
}
html, body {
    height: 100%;
    overflow: hidden;
}
body {
    display: flex;
    flex-direction: column;
    font-family: "Open Sans", "Liberation Sans", sans-serif;
    color: #212529;
    background: #fff;
}
.defs {
    display: none;
}
svg {
    flex: none;
    fill: currentColor;
}

/* browser chrome */
.tabstrip {
    height: 60px;
    flex: none;
    background: #dde7d6;
    display: flex;
    padding: 9px 0 0 9px;
}
.tab-search {
    width: 42px;
    height: 42px;
    border-radius: 14px;
    background: #f8fbf1;
    display: flex;
    align-items: center;
    justify-content: center;
}
.tab {
    width: 351px;
    height: 51px;
    margin-left: 14px;
    padding: 0 25px 9px 14px;
    display: flex;
    align-items: center;
    font-size: 17px;
    color: #43493f;
    position: relative;
}
.tab .tab-title {
    margin-left: 15px;
    flex: 1;
    white-space: nowrap;
    overflow: hidden;
}
.tab.active {
    width: 349px;
    margin-left: 1px;
    padding: 0 17px 9px 14px;
    background: #f8fbf1;
    border-radius: 14px 14px 0 0;
    color: #1f1f1f;
}
.tab.active .tab-title {
    margin-left: 13px;
    margin-right: 22px;
}
.tab.active::before,
.tab.active::after {
    content: "";
    position: absolute;
    bottom: 0;
    width: 14px;
    height: 14px;
}
.tab.active::before {
    left: -14px;
    background: radial-gradient(circle at 0 0, transparent 14px, #f8fbf1 14.500px);
}
.tab.active::after {
    right: -14px;
    background: radial-gradient(circle at 100% 0, transparent 14px, #f8fbf1 14.500px);
}
.tab-plus {
    margin: 13px 0 0 21px;
}
.win-btns {
    margin-left: auto;
    width: 190px;
    padding: 11px 24px 0 12px;
    display: flex;
    justify-content: space-between;
    align-items: flex-start;
}
.toolbar {
    height: 60px;
    flex: none;
    background: #f8fbf1;
    border-radius: 12px 12px 0 0;
    padding: 9px 0 0 6px;
    display: flex;
    align-items: flex-start;
}
.nav-btn {
    width: 54px;
    height: 51px;
    display: flex;
    align-items: center;
    justify-content: center;
}
.omnibox {
    width: 1366px;
    height: 51px;
    flex: none;
    margin-left: 12px;
    background: #e5ecdf;
    border-radius: 26px;
    display: flex;
    align-items: center;
    padding: 0 23px 0 7px;
}
.site-info {
    width: 36px;
    height: 36px;
    border-radius: 50%;
    background: #f8fbf1;
    display: flex;
    align-items: center;
    justify-content: center;
}
.url {
    margin-left: 12px;
    flex: 1;
    font-size: 20px;
    color: #1f1f1f;
    white-space: nowrap;
}
.url-path {
    color: #575d53;
}
.download {
    margin: 11px 0 0 28px;
}
.avatar {
    margin: 11px 0 0 27px;
}
.update-chip {
    width: 238px;
    height: 51px;
    flex: none;
    margin-left: 17px;
    border-radius: 26px;
    background: #b6f1ae;
    display: flex;
    align-items: center;
    justify-content: space-between;
    padding: 0 19px 0 19px;
    font-size: 17px;
    color: #16200f;
    white-space: nowrap;
}
.bookmarks {
    height: 61px;
    flex: none;
    background: #f8fbf1;
    border-bottom: 1px solid #e2e6da;
    display: flex;
    align-items: center;
    padding: 0 20px 0 28px;
    font-size: 17px;
    color: #43493f;
}
.bm-sep {
    width: 2px;
    height: 24px;
    background: #b6e6ac;
}
.apps + .bm-sep {
    margin-left: 23px;
}
.bm-item {
    display: flex;
    align-items: center;
    margin-left: 25px;
    gap: 13px;
    font-size: 17.500px;
    padding-bottom: 2px;
}
.bm-item svg {
    margin-top: 2px;
}
.bm-all {
    margin-left: auto;
    display: flex;
    align-items: center;
    gap: 13px;
}
.bm-all svg {
    margin-left: 10px;
}

/* page area */
.page {
    flex: 1;
    min-height: 0;
    display: flex;
    align-items: flex-start;
    overflow: hidden;
    background: #fff;
}
.sidebar {
    width: 375px;
    height: 336px;
    flex: none;
    background: #f8f9fa;
    border-right: 2px solid #dee2e6;
    overflow: hidden;
    position: relative;
}
.side-menu {
    list-style: none;
    margin-top: -17px;
    font-size: 20.200px;
    color: #495057;
}
.side-menu li {
    height: 56.500px;
    padding-left: 52px;
    display: flex;
    align-items: center;
}
.side-icon {
    width: 28px;
    height: 22px;
    margin-right: 20px;
    color: #495057;
}
.side-menu .side-accent {
    height: 87px;
    margin-top: 1px;
}
.side-icon-small {
    width: 17px;
    height: 23px;
    color: #ffc107;
    margin-right: 23px;
}
.side-strong {
    width: 172px;
    font-size: 21px;
    font-weight: 700;
    line-height: 33px;
    color: #495057;
    padding-bottom: 2px;
}
.new-badge {
    width: 59px;
    height: 28px;
    border-radius: 9px;
    background: #ffc107;
    color: #fff;
    font-size: 15px;
    font-weight: 700;
    display: flex;
    align-items: center;
    justify-content: center;
    margin-bottom: 3px;
}
.side-arrow {
    position: absolute;
    right: 3px;
    bottom: 3px;
    border-left: 5px solid transparent;
    border-right: 5px solid transparent;
    border-top: 7px solid #a3a3a3;
}
.main {
    flex: 1;
    min-width: 0;
    height: 100%;
    overflow: hidden;
    padding: 0 53px 0 48px;
}
.stats {
    display: grid;
    grid-template-columns: repeat(3, 1fr);
    gap: 36px;
    margin-top: -18px;
}
.stat {
    height: 139px;
    border-radius: 8px;
    border: 1px solid rgba(0, 0, 0, .125);
    padding: 17px 24px 0 24px;
    display: flex;
    justify-content: space-between;
}
.stat h5 {
    font-size: 22.200px;
    font-weight: 600;
    line-height: 31px;
}
.stat-value {
    font-size: 33px;
    font-weight: 600;
    line-height: 44px;
    margin-top: 10px;
}
.stat-info {
    background: #0dcaf0;
}
.stat-warning {
    background: #ffc107;
}
.stat-success {
    background: #198754;
}
.stat-icon {
    height: 48px;
    margin-top: 23px;
}
.icon-clip {
    width: 36px;
}
.icon-cal {
    width: 42px;
}
.icon-check {
    width: 48px;
}
.card {
    border: 2px solid #d6d7d8;
    border-radius: 8px;
    background: #fff;
}
.card-tabs {
    height: 296px;
    margin-top: 60px;
}
.tabs-head {
    height: 82px;
    background: #f7f7f7;
    border-bottom: 2px solid #d6d7d8;
    border-radius: 8px 8px 0 0;
    padding: 11px 0 0 34px;
    display: grid;
    grid-template-columns: 260px 219px 312px 229px 180px;
    align-items: start;
}
.tab-link {
    height: 59px;
    padding-left: 30px;
    display: flex;
    align-items: center;
    font-size: 20.200px;
    word-spacing: 2.500px;
    color: #495057;
    white-space: nowrap;
}
.tab-link.current {
    background: #fff;
    color: #000;
    border: 1px solid #e8e8e8;
    border-bottom: 0;
    border-radius: 8px 8px 0 0;
}
.ti {
    height: 24px;
}
.ti-gauge {
    width: 23px;
    margin-right: 26px;
}
.ti-clip {
    width: 18px;
    margin-right: 29px;
}
.ti-tools {
    width: 24px;
    margin-right: 24px;
}
.ti-cubes {
    width: 26px;
    margin-right: 22px;
}
.ti-calc {
    width: 17px;
    margin-right: 30px;
}
.tabs-body {
    padding: 23px 23px;
}
.tabs-body h4 {
    font-size: 28.500px;
    font-weight: 600;
    line-height: 38px;
}
.tabs-body p {
    font-size: 22.800px;
    line-height: 34px;
    margin-top: 13px;
}
.btn-grey {
    display: block;
    margin-top: 24px;
    width: 177px;
    height: 55px;
    border: 1px solid #6c757d;
    border-radius: 6px;
    background: #6c757d;
    color: #fff;
    font-family: inherit;
    font-size: 22.800px;
}
.card-pipeline {
    height: 256px;
    margin-top: 36px;
}
.card-head {
    height: 60px;
    background: #f7f7f7;
    border-bottom: 2px solid #d6d7d8;
    border-radius: 8px 8px 0 0;
    display: flex;
    align-items: center;
    padding-left: 25px;
}
.head-icon {
    width: 30px;
    height: 26px;
}
.card-head h3 {
    margin-left: 11px;
    font-size: 28.500px;
    font-weight: 600;
}
.pipe-body {
    padding: 24px 5px;
}
.pipe-row {
    height: 121px;
    border: 2px solid #e6e8ea;
    border-radius: 8px;
    display: flex;
    padding: 20px 42px 0 41px;
}
.pipe-name {
    width: 681px;
}
.pipe-dash {
    font-size: 24px;
    font-weight: 600;
    line-height: 34px;
}
.pipe-status {
    font-size: 22.600px;
    line-height: 34px;
    margin-top: 7px;
    color: #495057;
}
.pipe-badge {
    width: 342px;
    padding-top: 9px;
}
.units {
    display: inline-block;
    width: 66px;
    height: 32px;
    border-radius: 8px;
    background: #0dcaf0;
    color: #fff;
    font-size: 17px;
    font-weight: 700;
    line-height: 31px;
    text-align: center;
}
.pipe-progress {
    flex: 1;
    text-align: right;
    padding-top: 3px;
}
.bar {
    height: 11px;
    border-radius: 6px;
    background: #e9ecef;
}
.bar-label {
    margin-top: 18px;
    font-size: 20px;
    line-height: 30px;
    color: #6c757d;
}
.bottom-row {
    display: grid;
    grid-template-columns: 939px 1fr;
    gap: 36px;
    margin-top: 36px;
}
.card-peek {
    height: 80px;
    background: #f7f7f7;
}
.peek-left {
    padding-left: 33px;
}
.peek-right {
    padding-left: 22px;
}
.peek-marks {
    display: block;
}

/* right scrollbar */
.scrollbar {
    width: 16px;
    height: 100%;
    flex: none;
    position: relative;
}
.sb-up {
    position: absolute;
    top: 7px;
    left: 0;
    border-left: 6.500px solid transparent;
    border-right: 6.500px solid transparent;
    border-bottom: 10px solid #8f8f8f;
}
.sb-thumb {
    position: absolute;
    top: 215px;
    left: 0;
    width: 12px;
    height: 314px;
    border-radius: 6px;
    background: #8c8c8c;
}
.sb-down {
    position: absolute;
    bottom: 7px;
    left: 0;
    border-left: 6.500px solid transparent;
    border-right: 6.500px solid transparent;
    border-top: 10px solid #8f8f8f;
}

/* windows taskbar */
.taskbar {
    height: 70px;
    flex: none;
    display: flex;
    align-items: center;
    border-top: 2px solid #3f3f38;
    background: linear-gradient(90deg, #202020 0, #222219 40%, #282817 70%, #2a2a16 100%);
    color: #fff;
}
.weather {
    width: 225px;
    padding-left: 27px;
    position: relative;
    display: flex;
}
.weather-badge {
    position: absolute;
    left: 46px;
    top: -5px;
    width: 24px;
    height: 24px;
    border-radius: 50%;
    background: #c42b1c;
    font-size: 15px;
    line-height: 24px;
    text-align: center;
}
.task-icons {
    display: flex;
    margin-left: -14px;
}
.task {
    width: 66px;
    height: 46px;
    display: flex;
    align-items: center;
    justify-content: center;
    position: relative;
}
.over {
    overflow: visible;
}
.has-dot::after {
    content: "";
    position: absolute;
    bottom: -6px;
    left: 29px;
    width: 9px;
    height: 5px;
    border-radius: 3px;
    background: #9a9a9a;
}
.myhp {
    width: 36px;
    height: 41px;
    background: #0f96d8;
    border-radius: 1px;
    color: #e7f4fb;
    font-size: 11px;
    display: flex;
    align-items: center;
    justify-content: center;
}
.myhp b {
    font-style: italic;
    font-size: 15px;
    font-weight: 400;
}
.task-sep {
    width: 2px;
    height: 70px;
    background: #7d7d78;
}
.task-icons + .task-sep {
    margin-left: 4px;
}
.task-more {
    width: 137px;
    display: flex;
    justify-content: flex-end;
    gap: 4px;
    padding-right: 24px;
}
.task-more span {
    width: 5px;
    height: 5px;
    border-radius: 50%;
    background: #fff;
}
.tray {
    flex: 1;
    display: flex;
    align-items: center;
    padding-right: 27px;
}
.tray-chev {
    margin-left: 106px;
}
.tray-cloud {
    margin-left: 26px;
}
.tray-lang {
    width: 44px;
    margin-left: 22px;
    padding-top: 3px;
    text-align: center;
    font-size: 17px;
    line-height: 23px;
}
.tray-wifi {
    margin-left: 23px;
}
.tray-vol {
    margin-left: 13px;
}
.tray-batt {
    margin-left: 11px;
}
.tray-clock {
    margin-left: auto;
    text-align: right;
    font-size: 17.500px;
    line-height: 24px;
}
```
